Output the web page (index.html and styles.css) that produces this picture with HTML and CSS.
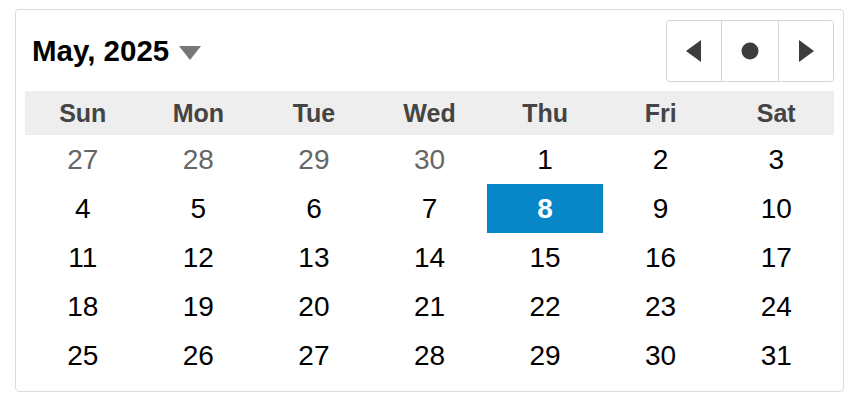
FILE: index.html
```html
<!DOCTYPE html>
<html>
<head>
<meta charset="utf-8">
<link rel="stylesheet" href="styles.css">
</head>
<body>
<div class="card">
  <div class="header">
    <div class="title">May, 2025 <span class="caret"></span></div>
    <div class="btns">
      <button class="btn"><svg width="16" height="22" viewBox="0 0 16 22"><polygon points="15,0 15,22 0,11" fill="#3d3d3d"/></svg></button>
      <button class="btn"><svg width="18" height="18" viewBox="0 0 18 18"><circle cx="9" cy="9" r="8.5" fill="#3d3d3d"/></svg></button>
      <button class="btn"><svg width="16" height="22" viewBox="0 0 16 22"><polygon points="1,0 1,22 16,11" fill="#3d3d3d"/></svg></button>
    </div>
  </div>
  <div class="grid">
    <div class="wd">Sun</div><div class="wd">Mon</div><div class="wd">Tue</div><div class="wd">Wed</div><div class="wd">Thu</div><div class="wd">Fri</div><div class="wd">Sat</div>
    <div class="d old">27</div><div class="d old">28</div><div class="d old">29</div><div class="d old">30</div><div class="d">1</div><div class="d">2</div><div class="d">3</div>
    <div class="d">4</div><div class="d">5</div><div class="d">6</div><div class="d">7</div><div class="d sel">8</div><div class="d">9</div><div class="d">10</div>
    <div class="d">11</div><div class="d">12</div><div class="d">13</div><div class="d">14</div><div class="d">15</div><div class="d">16</div><div class="d">17</div>
    <div class="d">18</div><div class="d">19</div><div class="d">20</div><div class="d">21</div><div class="d">22</div><div class="d">23</div><div class="d">24</div>
    <div class="d">25</div><div class="d">26</div><div class="d">27</div><div class="d">28</div><div class="d">29</div><div class="d">30</div><div class="d">31</div>
  </div>
</div>
</body>
</html>
```
FILE: styles.css
```css
html, body { margin: 0; padding: 0; background: #fff; }
body { font-family: "Liberation Sans", Arial, sans-serif; }
.card {
  box-sizing: border-box;
  width: 829px;
  margin: 9px 0 0 15px;
  border: 1px solid #dcdcdc;
  border-radius: 4px;
  padding: 10px 9px 11px 9px;
}
.header {
  display: flex;
  justify-content: space-between;
  align-items: center;
  height: 62px;
  margin-bottom: 9px;
  padding-left: 7px;
}
.title {
  font-size: 29.5px;
  font-weight: bold;
  color: #000;
  display: flex;
  align-items: center;
}
.caret {
  display: inline-block;
  width: 0; height: 0;
  border-left: 11.5px solid transparent;
  border-right: 11.5px solid transparent;
  border-top: 14px solid #777;
  margin-left: 10px;
  margin-top: 4px;
}
.btns {
  display: flex;
  height: 62px;
  border: 1px solid #d4d4d4;
  border-radius: 4px;
  box-sizing: border-box;
}
.btn {
  background: #fff;
  border: none;
  border-left: 1px solid #d4d4d4;
  width: 57px;
  padding: 0;
  display: flex;
  align-items: center;
  justify-content: center;
  border-radius: 0;
}
.btn:first-child { border-left: none; width: 54px; border-radius: 4px 0 0 4px; }
.btn:last-child { border-radius: 0 4px 4px 0; width: 55px; }
.grid {
  display: grid;
  grid-template-columns: repeat(7, 1fr);
  grid-template-rows: 44px repeat(5, 49px);
}
.wd {
  background: #eeeeee;
  display: flex;
  align-items: center;
  justify-content: center;
  font-size: 25px;
  font-weight: bold;
  color: #444;
}
.d {
  display: flex;
  align-items: center;
  justify-content: center;
  font-size: 28px;
  color: #000;
}
.d.old { color: #666; }
.d.sel {
  background: #0786c8;
  color: #fff;
  font-weight: bold;
}
```
